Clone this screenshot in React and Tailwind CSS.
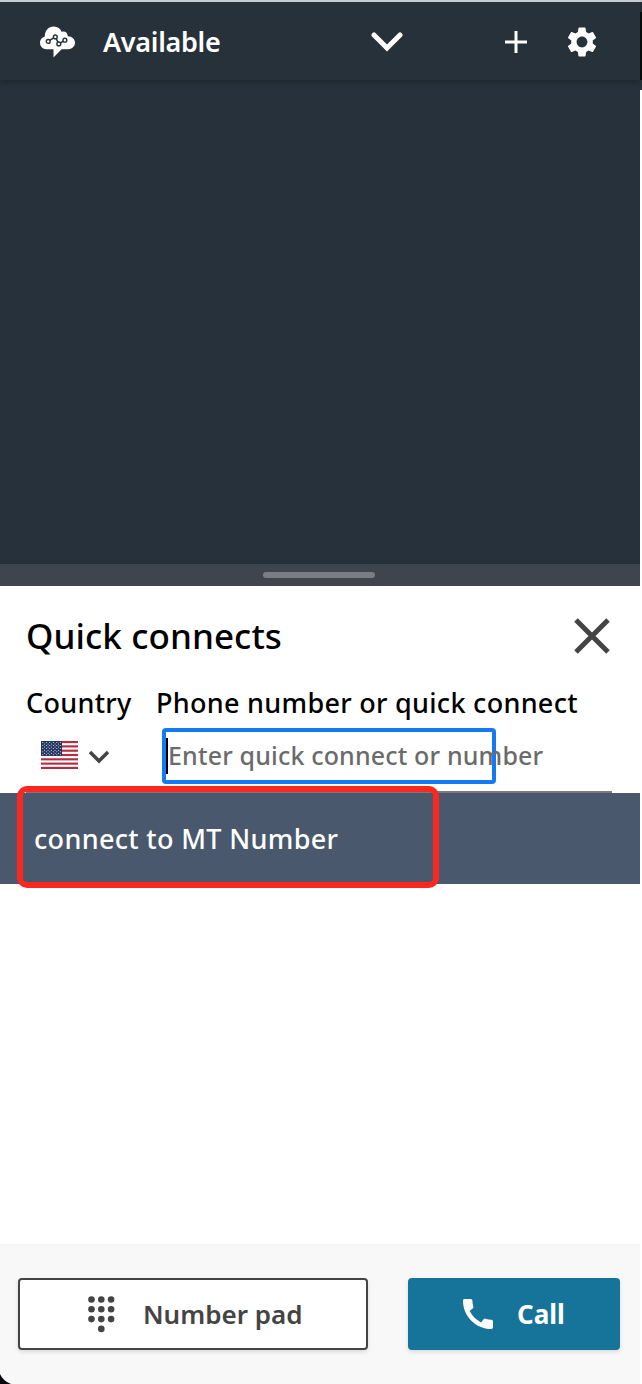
import React from "react";
import { MdSettings, MdCall } from "react-icons/md";

const stars = Array.from({ length: 9 }, (_, r) =>
  Array.from({ length: r % 2 ? 5 : 6 }, (_, c) => [1.8 + c * 3.5 + (r % 2 ? 1.75 : 0), 1.4 + r * 1.55])
).flat();

const keys = [0, 1, 2].flatMap((r) => [0, 1, 2].map((c) => [3.5 + c * 9.8, 3.5 + r * 9.8])).concat([[13.3, 32.9]]);

function CloudLogo() {
  return (
    <svg className="h-8 w-9 shrink-0" viewBox="0 0 36 32" fill="none">
      <path
        d="M6.500 23.200C2.600 23.200 0 20.400 0 16.800c0-3 1.900-5.400 4.800-6.200C4.800 4.600 8.600 0.500 13.800 0.500c3.900 0 6.700 2.200 8 5.500 2.300-1.200 5.600-.2 6 4.200 4.300.3 7.200 2.800 7.200 6.400 0 4-2.900 6.600-7 6.600h-6.400L13.500 31.500V23.200z"
        fill="#fff"
      />
      <path d="M8.200 15.400 15.300 10.900l3.500 7 6.100-3.700" stroke="#27313a" strokeWidth="1.500" />
      <g fill="#fff" stroke="#27313a" strokeWidth="1.400">
        <circle cx="8.200" cy="15.400" r="1.900" />
        <circle cx="15.300" cy="10.900" r="1.900" />
        <circle cx="18.800" cy="17.900" r="1.900" />
        <circle cx="24.900" cy="14.200" r="1.900" />
      </g>
    </svg>
  );
}

function Flag() {
  return (
    <svg className="h-7 w-[37px]" viewBox="0 0 37 28">
      <rect width="37" height="28" fill="#fff" />
      {[0, 1, 2, 3, 4, 5, 6].map((i) => (
        <rect key={i} y={i * 4.308} width="37" height="2.154" fill="#b22f43" />
      ))}
      <rect width="21" height="15" fill="#243560" />
      {stars.map(([x, y], i) => (
        <circle key={i} cx={x} cy={y} r="0.5" fill="#fff" />
      ))}
    </svg>
  );
}

export default function App() {
  return (
    <div className="relative flex h-[1384px] w-[642px] overflow-hidden bg-white font-['Noto_Sans',sans-serif] font-medium whitespace-nowrap">
      <div className="flex w-[640px] flex-col">
        <header className="z-10 flex h-20 shrink-0 items-center border-t-2 border-[#c5ccd2] bg-[#27313a] pt-0.5 pl-10 text-white shadow-[0_2px_6px_rgba(0,0,0,0.25)]">
          <CloudLogo />
          <span className="ml-[27px] w-[268px] text-[27px] font-semibold tracking-[-0.3px]">Available</span>
          <svg className="h-5 w-8" viewBox="0 0 32 20" fill="none" stroke="#fff" strokeWidth="5">
            <path d="m3 3 13 13 13-13" strokeLinecap="round" />
          </svg>
          <svg className="ml-[102px] size-[22px]" viewBox="0 0 22 22" stroke="#fff" strokeWidth="3">
            <path d="M11 0v22M0 11h22" />
          </svg>
          <MdSettings className="ml-[37px] size-9" />
        </header>
        <div className="h-[484px] shrink-0 bg-[#26313b]" />
        <div className="flex h-[22px] shrink-0 items-center justify-center bg-[#3e454f]">
          <div className="mr-0.5 h-1.5 w-28 rounded-full bg-[#797e84]" />
        </div>
        <main className="flex h-[658px] shrink-0 flex-col">
          <div className="flex h-[100px] items-center justify-between pr-[30px] pl-[26px]">
            <h1 className="text-[35px] tracking-[0.08px] text-black">Quick connects</h1>
            <svg className="size-9" viewBox="0 0 36 36" stroke="#444" strokeWidth="5">
              <path d="m2 2 32 32M34 2 2 34" />
            </svg>
          </div>
          <div className="mr-7 ml-[26px] flex h-[107px] border-b-2 border-[#7b7b7b]">
            <div className="w-[130px]">
              <div className="h-[42px] text-[27px] leading-[34px] tracking-[0.3px] text-black">Country</div>
              <div className="flex h-[54px] items-center gap-[11px] pl-[15px]">
                <Flag />
                <svg className="mt-1 h-3.5 w-5" viewBox="0 0 20 14" fill="none" stroke="#444" strokeWidth="3.500">
                  <path d="m1 2 9 9 9-9" />
                </svg>
              </div>
            </div>
            <div className="w-[456px]">
              <div className="h-[42px] text-[27px] leading-[34px] tracking-[0.29px] text-black">Phone number or quick connect</div>
              <div className="ml-1.5 flex h-14 w-[334px] items-center rounded-[4px] border-4 border-[#147af3]">
                <span className="h-9 w-0.5 shrink-0 bg-black" />
                <span className="text-[25px] tracking-[0.16px] text-[#6b6b6b]">Enter quick connect or number</span>
              </div>
            </div>
          </div>
          <div className="relative flex h-[91px] items-center bg-[#49586c] pt-0.5 pl-[34px] text-[27px] tracking-[0.33px] text-white">
            connect to MT Number
            <div className="absolute -top-[7px] left-[17px] h-[102px] w-[422px] rounded-[10px] border-[6px] border-[#fb2820]" />
          </div>
        </main>
        <footer className="flex h-[140px] shrink-0 gap-10 bg-[#f8f8f8] px-[18px] pt-[34px] text-[26px] font-semibold shadow-[inset_0_4px_4px_-2px_rgba(0,0,0,0.025)]">
          <button className="flex h-[72px] w-[350px] shrink-0 items-center rounded-[4px] border-2 border-[#444] bg-white pl-[68px] text-[#444] shadow-[0_2px_4px_rgba(0,0,0,0.12)]">
            <svg className="h-[37px] w-[27px]" viewBox="0 0 27 37" fill="#444">
              {keys.map(([x, y], i) => (
                <circle key={i} cx={x} cy={y} r="3.300" />
              ))}
            </svg>
            <span className="ml-7">Number pad</span>
          </button>
          <button className="flex h-[72px] w-[212px] shrink-0 items-center rounded-[4px] bg-[#16739a] pl-[50px] text-white shadow-[0_2px_4px_rgba(0,0,0,0.12)]">
            <MdCall className="size-10" />
            <span className="ml-[19px] font-bold">Call</span>
          </button>
        </footer>
      </div>
      <div className="flex w-0.5 flex-col">
        <div className="h-0.5 bg-[#c5ccd2]" />
        <div className="h-2.5 bg-[#27313a]" />
        <div className="h-[68px] bg-[#090c0e]" />
        <div className="h-2.5 bg-[#27313a]" />
      </div>
      <svg className="absolute bottom-0 left-0 h-2.5 w-3" viewBox="0 0 12 10">
        <path d="M0 0Q3 7 11 10H0Z" fill="#08080f" />
      </svg>
    </div>
  );
}
